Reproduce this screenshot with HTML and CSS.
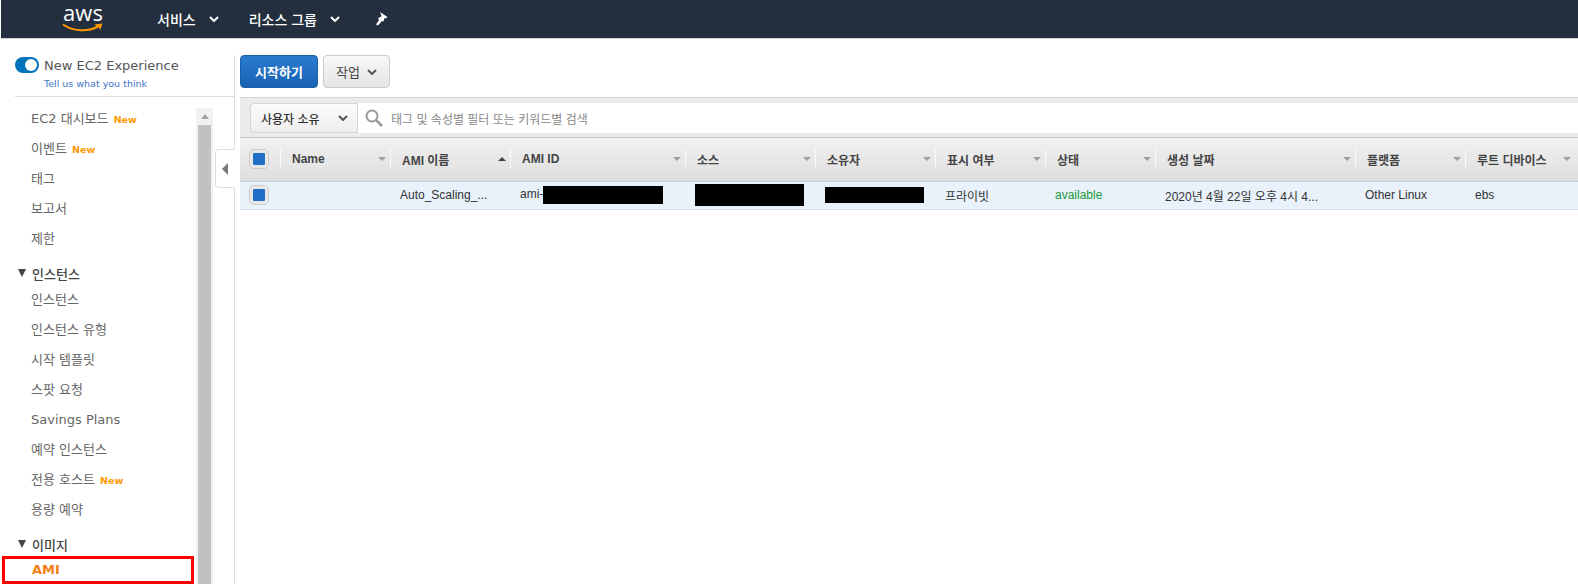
FILE: index.html
```html
<!DOCTYPE html>
<html lang="ko">
<head>
    <meta charset="UTF-8">
    <title>AMI</title>
    <link rel="stylesheet" href="styles.css">
</head>
<body>
    <header class="top-bar">
        <div class="aws-logo">
            <span class="aws-word">aws</span>
            <svg class="aws-smile" width="42" height="12" viewBox="0 0 42 12">
                <path d="M1 2.5C11 9.5 26 10 36 4.5" fill="none" stroke="#f90" stroke-width="2"/>
                <path d="M32 2.5L40.5 1.5L38 8.5C38 6 36 4.5 32 2.5Z" fill="#f90"/>
            </svg>
        </div>
        <a class="top-link services">서비스
            <svg class="chevron" width="10" height="6" viewBox="0 0 10 6"><path d="M1 1L5 5L9 1" fill="none" stroke="#fff" stroke-width="2"/></svg>
        </a>
        <a class="top-link groups">리소스 그룹
            <svg class="chevron" width="10" height="6" viewBox="0 0 10 6"><path d="M1 1L5 5L9 1" fill="none" stroke="#fff" stroke-width="2"/></svg>
        </a>
        <svg class="pin" width="13" height="14" viewBox="0 0 13 14"><path d="M5 0L12.5 5L10.5 6.5L9.5 6L8.5 9.5L7 9L3 13.5L1 12.5L4 8L3 6L6.5 4.5L6 2.5Z" fill="#fff"/></svg>
    </header>

    <div class="layout">
        <aside class="sidebar">
            <div class="experience">
                <div class="toggle-row">
                    <span class="toggle"></span>
                    <span class="toggle-label">New EC2 Experience</span>
                </div>
                <a class="feedback">Tell us what you think</a>
            </div>
            <div class="nav-wrap">
                <nav class="nav">
                    <a class="nav-item">EC2 대시보드 <b class="new">New</b></a>
                    <a class="nav-item">이벤트 <b class="new">New</b></a>
                    <a class="nav-item">태그</a>
                    <a class="nav-item">보고서</a>
                    <a class="nav-item">제한</a>
                    <div class="nav-group"><i class="tri"></i>인스턴스</div>
                    <a class="nav-item">인스턴스</a>
                    <a class="nav-item">인스턴스 유형</a>
                    <a class="nav-item">시작 템플릿</a>
                    <a class="nav-item">스팟 요청</a>
                    <a class="nav-item">Savings Plans</a>
                    <a class="nav-item">예약 인스턴스</a>
                    <a class="nav-item">전용 호스트 <b class="new">New</b></a>
                    <a class="nav-item">용량 예약</a>
                    <div class="nav-group"><i class="tri"></i>이미지</div>
                    <a class="nav-item active">AMI</a>
                </nav>
                <div class="scrollbar">
                    <div class="scroll-up"></div>
                    <div class="scroll-thumb"></div>
                </div>
            </div>
            <div class="collapse-tab"><i class="collapse-arrow"></i></div>
        </aside>

        <main class="main">
            <div class="toolbar">
                <button class="btn btn-primary">시작하기</button>
                <button class="btn btn-default">작업
                    <svg class="chevron" width="10" height="6" viewBox="0 0 10 6"><path d="M1 1L5 5L9 1" fill="none" stroke="#555" stroke-width="2"/></svg>
                </button>
            </div>

            <div class="filter-bar">
                <div class="owner-select">사용자 소유
                    <svg class="chevron" width="10" height="6" viewBox="0 0 10 6"><path d="M1 1L5 5L9 1" fill="none" stroke="#555" stroke-width="2"/></svg>
                </div>
                <div class="search">
                    <svg class="search-icon" width="18" height="18" viewBox="0 0 18 18">
                        <circle cx="7" cy="7" r="5.5" fill="none" stroke="#999" stroke-width="2"/>
                        <path d="M11 11L17 17" stroke="#999" stroke-width="2.5"/>
                    </svg>
                    <span class="search-text">태그 및 속성별 필터 또는 키워드별 검색</span>
                </div>
            </div>

            <table class="ami-table">
                <thead>
                    <tr>
                        <th class="col-check"><span class="checkbox"></span></th>
                        <th class="col-110"><div class="th-in">Name<i class="sort"></i></div></th>
                        <th class="col-120"><div class="th-in">AMI 이름<i class="sort up"></i></div></th>
                        <th class="col-175"><div class="th-in">AMI ID<i class="sort"></i></div></th>
                        <th class="col-130"><div class="th-in">소스<i class="sort"></i></div></th>
                        <th class="col-120"><div class="th-in">소유자<i class="sort"></i></div></th>
                        <th class="col-110"><div class="th-in">표시 여부<i class="sort"></i></div></th>
                        <th class="col-110"><div class="th-in">상태<i class="sort"></i></div></th>
                        <th class="col-200"><div class="th-in">생성 날짜<i class="sort"></i></div></th>
                        <th class="col-110"><div class="th-in">플랫폼<i class="sort"></i></div></th>
                        <th class="col-110"><div class="th-in">루트 디바이스<i class="sort"></i></div></th>
                        <th class="col-rest"></th>
                    </tr>
                </thead>
                <tbody>
                    <tr>
                        <td><span class="checkbox"></span></td>
                        <td></td>
                        <td>Auto_Scaling_...</td>
                        <td>ami-<span class="redact redact-id"></span></td>
                        <td><span class="redact redact-source"></span></td>
                        <td><span class="redact redact-owner"></span></td>
                        <td>프라이빗</td>
                        <td class="available">available</td>
                        <td>2020년 4월 22일 오후 4시 4...</td>
                        <td>Other Linux</td>
                        <td>ebs</td>
                        <td></td>
                    </tr>
                </tbody>
            </table>
        </main>
    </div>
</body>
</html>
```

FILE: styles.css
```css
* {
    box-sizing: border-box;
}

html,
body {
    height: 100%;
}

body {
    margin: 0;
    overflow: hidden;
    background-color: #ffffff;
    font-family: "Liberation Sans", "Noto Sans CJK KR", sans-serif;
    font-size: 12px;
    color: #444444;
}

/* top bar */
.top-bar {
    display: flex;
    align-items: center;
    height: 39px;
    padding-left: 61px;
    background-color: #232f3e;
    border-left: 1px solid #ffffff;
    border-bottom: 1px solid #cfd3d8;
    color: #ffffff;
}

.aws-logo {
    display: flex;
    flex-direction: column;
    align-items: center;
    width: 42px;
    height: 38px;
    margin-right: 53px;
}

.aws-word {
    height: 22px;
    margin-top: 1px;
    font-family: "Open Sans", sans-serif;
    font-size: 22px;
    line-height: 22px;
}

.aws-smile {
    display: block;
    margin-top: -1px;
}

.top-link {
    display: flex;
    align-items: center;
    font-family: "Noto Sans CJK KR", sans-serif;
    font-size: 14px;
    font-weight: 500;
}

.top-link .chevron {
    margin-left: 13px;
}

.services {
    margin-right: 30px;
}

.groups {
    margin-right: 35px;
}

/* page */
.layout {
    display: flex;
    height: 545px;
}

.sidebar {
    position: relative;
    flex: none;
    width: 235px;
    margin-top: 16px;
    padding-left: 15px;
    border-right: 1px solid #dddddd;
}

.experience {
    height: 42px;
    border-bottom: 1px solid #dddddd;
    font-family: "DejaVu Sans", sans-serif;
}

.toggle-row {
    display: flex;
    align-items: center;
    height: 20px;
    margin-top: 0;
}

.toggle {
    position: relative;
    width: 24px;
    height: 16px;
    margin-right: 5px;
    border-radius: 8px;
    background-color: #0073bb;
}

.toggle::after {
    content: "";
    position: absolute;
    top: 2px;
    right: 2px;
    width: 12px;
    height: 12px;
    border-radius: 50%;
    background-color: #ffffff;
}

.toggle-label {
    font-size: 13px;
    color: #555555;
}

.feedback {
    display: block;
    margin-top: 3px;
    margin-left: 29px;
    font-size: 9.5px;
    color: #3b73c8;
}

.nav-wrap {
    display: flex;
    margin-left: -15px;
    padding-top: 7px;
}

.nav {
    width: 196px;
    flex: none;
    font-family: "DejaVu Sans", "Noto Sans CJK KR", sans-serif;
}

.nav-item {
    display: block;
    height: 30px;
    padding-left: 31px;
    font-family: "DejaVu Sans", "Noto Sans CJK KR", sans-serif;
    font-size: 13px;
    line-height: 30px;
    color: #666666;
}

.new {
    margin-left: 1px;
    font-size: 9.5px;
    color: #ff9900;
}

.nav-group {
    display: flex;
    align-items: center;
    height: 30px;
    margin-top: 4px;
    margin-bottom: -3px;
    padding-left: 18px;
    font-size: 13px;
    font-weight: 500;
    color: #444444;
}

.tri {
    width: 0;
    height: 0;
    margin-right: 6px;
    border-top: 8px solid #444444;
    border-left: 4.5px solid transparent;
    border-right: 4.5px solid transparent;
}

.nav-item.active {
    height: 28px;
    margin: -1px 0 0 2px;
    padding-left: 29px;
    border: 3px solid #ff0000;
    border-bottom-width: 3px;
    line-height: 22px;
    font-weight: bold;
    color: #f57f17;
    width: 192px;
    padding-left: 27px;
}

.scrollbar {
    display: flex;
    flex-direction: column;
    align-items: center;
    width: 17px;
    height: 480px;
    margin-top: 4px;
    background-color: #f1f1f1;
}

.scroll-up {
    width: 13px;
    height: 17px;
    flex: none;
    position: relative;
}

.scroll-up::after {
    content: "";
    position: absolute;
    top: 6px;
    left: 3px;
    border-bottom: 5px solid #a3a3a3;
    border-left: 4px solid transparent;
    border-right: 4px solid transparent;
}

.scroll-thumb {
    flex: 1;
    width: 13px;
    background-color: #c1c1c1;
}

.collapse-tab {
    position: absolute;
    top: 94px;
    right: -1px;
    display: flex;
    align-items: center;
    justify-content: center;
    width: 20px;
    height: 39px;
    background-color: #ffffff;
    border: 1px solid #dddddd;
    border-right-color: #ffffff;
    border-radius: 4px 0 0 4px;
}

.collapse-arrow {
    border-right: 6px solid #777777;
    border-top: 6px solid transparent;
    border-bottom: 6px solid transparent;
}

/* main */
.main {
    flex: 1;
    min-width: 0;
    padding-left: 5px;
    padding-top: 16px;
}

.toolbar {
    display: flex;
    gap: 5px;
    height: 42px;
}

.btn {
    display: flex;
    align-items: center;
    justify-content: center;
    height: 33px;
    font-family: "Noto Sans CJK KR", sans-serif;
    font-size: 13px;
    border-radius: 4px;
}

.btn-primary {
    width: 78px;
    border: 1px solid #1b5fa8;
    background: linear-gradient(#2a7bd0, #1a62b3);
    color: #ffffff;
    font-weight: 700;
}

.btn-default {
    width: 67px;
    gap: 7px;
    border: 1px solid #cccccc;
    background: linear-gradient(#f8f8f8, #e4e4e4);
    color: #444444;
}

.filter-bar {
    display: flex;
    height: 41px;
    padding: 5px 0 5px 10px;
    border-top: 1px solid #d5d5d5;
    border-bottom: 1px solid #c8c8c8;
    background-color: #ebebeb;
}

.owner-select {
    display: flex;
    align-items: center;
    justify-content: space-between;
    width: 108px;
    height: 30px;
    padding: 0 9px 0 10px;
    border: 1px solid #d5d5d5;
    border-radius: 4px 0 0 4px;
    background: linear-gradient(#fbfbfb, #eeeeee);
    font-family: "Noto Sans CJK KR", sans-serif;
    font-size: 12px;
    font-weight: 500;
    color: #333333;
}

.search {
    flex: 1;
    display: flex;
    align-items: center;
    gap: 8px;
    height: 30px;
    padding-left: 7px;
    background-color: #ffffff;
}

.search-text {
    font-family: "Noto Sans CJK KR", sans-serif;
    font-size: 12px;
    color: #888888;
}

.ami-table {
    table-layout: fixed;
    width: 1338px;
    border-collapse: collapse;
}

.col-check {
    width: 40px;
}

.col-110 {
    width: 110px;
}

.col-120 {
    width: 120px;
}

.col-130 {
    width: 130px;
}

.col-175 {
    width: 175px;
}

.col-200 {
    width: 200px;
}

.col-rest {
    width: 3px;
}

.ami-table th {
    height: 43px;
    padding: 0;
    border-bottom: 1px solid #cccccc;
    background: linear-gradient(#f1f1f1, #dedede);
    text-align: left;
    font-size: 12px;
    font-weight: bold;
    color: #444444;
}

.th-in {
    position: relative;
    display: flex;
    align-items: center;
    justify-content: space-between;
    height: 20px;
    padding: 0 4px 0 11px;
    border-left: 1px solid #fafafa;
}

.sort {
    flex: none;
    border-top: 4px solid #a0a0a0;
    border-left: 4px solid transparent;
    border-right: 4px solid transparent;
}

.sort.up {
    border-top: 0;
    border-bottom: 4px solid #444444;
}

.ami-table td {
    height: 28px;
    padding: 0 0 0 10px;
    border-bottom: 1px solid #d8dde3;
    background-color: #e9f1fb;
    font-size: 12px;
    color: #333333;
    white-space: nowrap;
    overflow: hidden;
}

.ami-table td.available {
    color: #1d9a3c;
}

.checkbox {
    display: block;
    width: 18px;
    height: 18px;
    margin-left: 10px;
    border: 3px solid #e8e8e8;
    outline: 1px solid #cccccc;
    border-radius: 4px;
    background-color: #1f6fc6;
}

.ami-table td:first-child {
    padding: 0;
}

.redact {
    display: inline-block;
    vertical-align: middle;
    background-color: #000000;
}

.redact-id {
    width: 120px;
    height: 18px;
}

.redact-source {
    width: 109px;
    height: 22px;
}

.redact-owner {
    width: 99px;
    height: 16px;
}
```
